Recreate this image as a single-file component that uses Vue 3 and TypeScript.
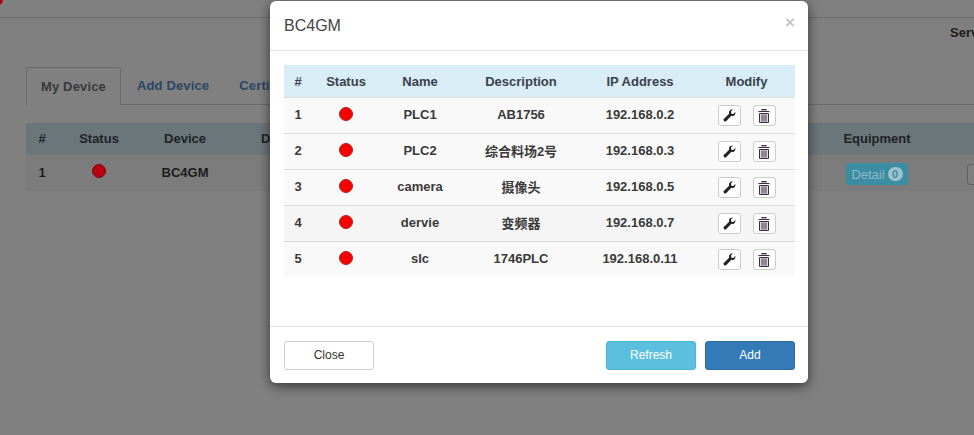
<template>
  <div class="page">
    <div class="topbar"><span class="logo-dot"></span></div>
    <div class="server-row"><span>Serv</span></div>

    <div class="tabs">
      <a class="tab active">My Device</a>
      <a class="tab">Add Device</a>
      <a class="tab">Certi</a>
    </div>

    <div class="bg-table">
      <div class="bg-row bg-head">
        <span>#</span><span>Status</span><span>Device</span><span class="left">D</span><span></span><span>Equipment</span><span></span>
      </div>
      <div class="bg-row bg-body">
        <span>1</span>
        <span><i class="dot dim"></i></span>
        <span>BC4GM</span>
        <span></span>
        <span></span>
        <span class="cell-btn"><a class="detail">Detail <b class="badge">0</b></a></span>
        <span class="cell-btn stub-wrap"><i class="stub"></i></span>
      </div>
    </div>

    <div class="modal">
      <div class="modal-header">
        <h4>BC4GM</h4>
        <span class="close-x">×</span>
      </div>
      <div class="modal-body">
        <table>
          <colgroup>
            <col style="width: 28px" />
            <col style="width: 68px" />
            <col style="width: 80px" />
            <col style="width: 122px" />
            <col style="width: 116px" />
            <col />
          </colgroup>
          <thead>
            <tr>
              <th>#</th>
              <th>Status</th>
              <th>Name</th>
              <th>Description</th>
              <th>IP Address</th>
              <th>Modify</th>
            </tr>
          </thead>
          <tbody>
            <tr v-for="(d, i) in devices" :key="d.name" :class="{ hovered: i === 3 }">
              <td>{{ i + 1 }}</td>
              <td><i class="dot"></i></td>
              <td>{{ d.name }}</td>
              <td>{{ d.description }}</td>
              <td>{{ d.ip }}</td>
              <td class="modify">
                <div class="actions">
                  <button class="icon-btn" type="button">
                    <svg width="13" height="13" viewBox="0 0 14 14">
                      <path d="M13.300 3.200c.3 1.300-.1 2.600-1 3.400-.9.9-2.200 1.200-3.300.8L3.300 13.100c-.5.5-1.300.5-1.800.1l-.6-.6c-.5-.5-.5-1.300 0-1.800L6.600 5c-.4-1.200-.1-2.500.8-3.400.9-.9 2.100-1.200 3.300-1L8.600 2.800l.4 2.200 2.200.4z" fill="#222" />
                    </svg>
                  </button>
                  <button class="icon-btn" type="button">
                    <svg width="12" height="14" viewBox="0 0 12 14">
                      <path d="M4 1.500V.6h4v.9M.5 2.500h11" stroke="#3a2c3a" stroke-width="1.200" fill="none" />
                      <path d="M1.500 4.500h9v9h-9z" fill="#e6dce6" stroke="#3a2c3a" />
                      <path d="M4 5.500v7M6 5.500v7M8 5.500v7" stroke="#3a2c3a" />
                    </svg>
                  </button>
                </div>
              </td>
            </tr>
          </tbody>
        </table>
      </div>
      <div class="modal-footer">
        <button class="btn btn-default" type="button">Close</button>
        <div class="right-btns">
          <button class="btn btn-info" type="button">Refresh</button>
          <button class="btn btn-primary" type="button">Add</button>
        </div>
      </div>
    </div>
  </div>
</template>

<script setup lang="ts">
interface Device {
  name: string
  description: string
  ip: string
}

const devices: Device[] = [
  { name: 'PLC1', description: 'AB1756', ip: '192.168.0.2' },
  { name: 'PLC2', description: '综合料场2号', ip: '192.168.0.3' },
  { name: 'camera', description: '摄像头', ip: '192.168.0.5' },
  { name: 'dervie', description: '变频器', ip: '192.168.0.7' },
  { name: 'slc', description: '1746PLC', ip: '192.168.0.11' },
]
</script>

<style>
html,
body {
  margin: 0;
  height: 100%;
  overflow: hidden;
}
</style>

<style scoped>
.page {
  position: relative;
  width: 974px;
  height: 435px;
  overflow: hidden;
  background: #808080;
  font-family: "Liberation Sans", "Noto Sans CJK SC", sans-serif;
  font-size: 13px;
  color: #222;
}

.topbar {
  height: 17px;
  border-bottom: 1px solid #6e6e6e;
  overflow: hidden;
}

.logo-dot {
  display: block;
  width: 10px;
  height: 10px;
  margin: -5px 0 0 -7px;
  border-radius: 50%;
  background: #b00010;
}

.server-row {
  display: flex;
  height: 29px;
  padding-left: 950px;
  align-items: center;
  font-weight: bold;
  white-space: nowrap;
  color: #1c1c1c;
}

.tabs {
  display: flex;
  margin: 20px 0 0 26px;
  height: 37px;
  border-bottom: 1px solid #6b6b6b;
  font-weight: bold;
  letter-spacing: 0.15px;
}

.tab {
  padding: 0 14px;
  line-height: 38px;
  color: #2c4663;
  white-space: nowrap;
  margin-right: 2px;
}

.tab.active {
  height: 37px;
  color: #3a3a3a;
  background: #808080;
  border: 1px solid #6b6b6b;
  border-bottom: 0;
  border-radius: 3px 3px 0 0;
  line-height: 37px;
}

.bg-table {
  margin: 18px 0 0 26px;
  font-weight: bold;
}

.bg-row {
  display: grid;
  grid-template-columns: 32px 82px 90px 40px 557px 100px 80px;
  align-items: center;
  text-align: center;
  white-space: nowrap;
}

.bg-head {
  height: 31px;
  background: #6b767a;
  border-bottom: 1px solid #73797b;
  color: #1e2326;
}

.bg-head .left {
  text-align: left;
  padding-left: 31px;
}

.bg-body {
  height: 36px;
  background: #7c7c7c;
  color: #1c1c1c;
}

.bg-body > span {
  margin-bottom: 2px;
}

.bg-body > .cell-btn {
  margin-bottom: 0;
  margin-top: 2px;
}

.dot {
  display: inline-block;
  width: 12px;
  height: 12px;
  margin: 0 1px 2px 0;
  border-radius: 50%;
  background: #f80000;
  border: 1px solid #b02020;
  vertical-align: middle;
}

.dot.dim {
  background: #b80010;
  border-color: #7a0810;
}

.detail {
  display: inline-flex;
  align-items: center;
  justify-content: center;
  gap: 3px;
  width: 62px;
  height: 22px;
  border-radius: 3px;
  background: #3b8da3;
  color: #8fb8c4;
  font-weight: normal;
}

.badge {
  display: inline-block;
  min-width: 15px;
  height: 14px;
  line-height: 14px;
  border-radius: 8px;
  background: #9fc2cc;
  color: #3b8da3;
  font-size: 11px;
}

.stub-wrap {
  text-align: left;
  padding-left: 40px;
}

.stub {
  display: block;
  box-sizing: border-box;
  width: 20px;
  height: 21px;
  border: 1px solid #5f5f5f;
  border-radius: 3px;
  background: #808080;
}

.modal {
  position: absolute;
  left: 270px;
  top: 1px;
  width: 538px;
  height: 382px;
  display: flex;
  flex-direction: column;
  background: #fff;
  border-radius: 6px;
  box-shadow: 0 3px 12px rgba(0, 0, 0, 0.6);
}

.modal-header {
  position: relative;
  display: flex;
  align-items: center;
  height: 49px;
  padding: 0 14px;
  border-bottom: 1px solid #e5e5e5;
}

.modal-header h4 {
  margin: 0;
  font-size: 16px;
  font-weight: normal;
  color: #444;
}

.close-x {
  position: absolute;
  right: 13px;
  top: 11px;
  font-size: 17px;
  line-height: 21px;
  font-weight: bold;
  color: #c4c4c4;
}

.modal-body {
  height: 261px;
  padding: 14px 13px 0 14px;
}

table {
  width: 511px;
  border-collapse: collapse;
  table-layout: fixed;
  font-weight: bold;
  color: #3a3a3a;
}

th {
  height: 32px;
  padding: 0;
  background: #d9edf7;
  border-bottom: 1px solid #ddd;
  color: #39424a;
}

td {
  height: 33px;
  padding: 0 0 2px;
  text-align: center;
  background: #f9f9f9;
  border-top: 1px solid #ddd;
}

td.modify {
  padding: 0;
}

tbody tr:first-child td {
  border-top: 0;
}

tr.hovered td {
  background: #f5f5f5;
}

.actions {
  display: flex;
  justify-content: center;
  gap: 12px;
}

.icon-btn {
  display: flex;
  align-items: center;
  justify-content: center;
  box-sizing: border-box;
  width: 23px;
  height: 21px;
  padding: 0;
  border: 1px solid #ccc;
  border-radius: 3px;
  background: #fff;
}

.modal-footer {
  display: flex;
  justify-content: space-between;
  align-items: center;
  height: 56px;
  padding: 0 13px 0 14px;
  border-top: 1px solid #e5e5e5;
}

.right-btns {
  display: flex;
  gap: 9px;
}

.btn {
  box-sizing: border-box;
  width: 90px;
  height: 29px;
  padding: 0;
  border: 1px solid transparent;
  border-radius: 3px;
  font-family: inherit;
  font-size: 12px;
}

.btn-default {
  background: #fff;
  border-color: #ccc;
  color: #333;
}

.btn-info {
  background: #5bc0de;
  border-color: #46b8da;
  color: #fff;
}

.btn-primary {
  background: #337ab7;
  border-color: #2e6da4;
  color: #fff;
}
</style>
